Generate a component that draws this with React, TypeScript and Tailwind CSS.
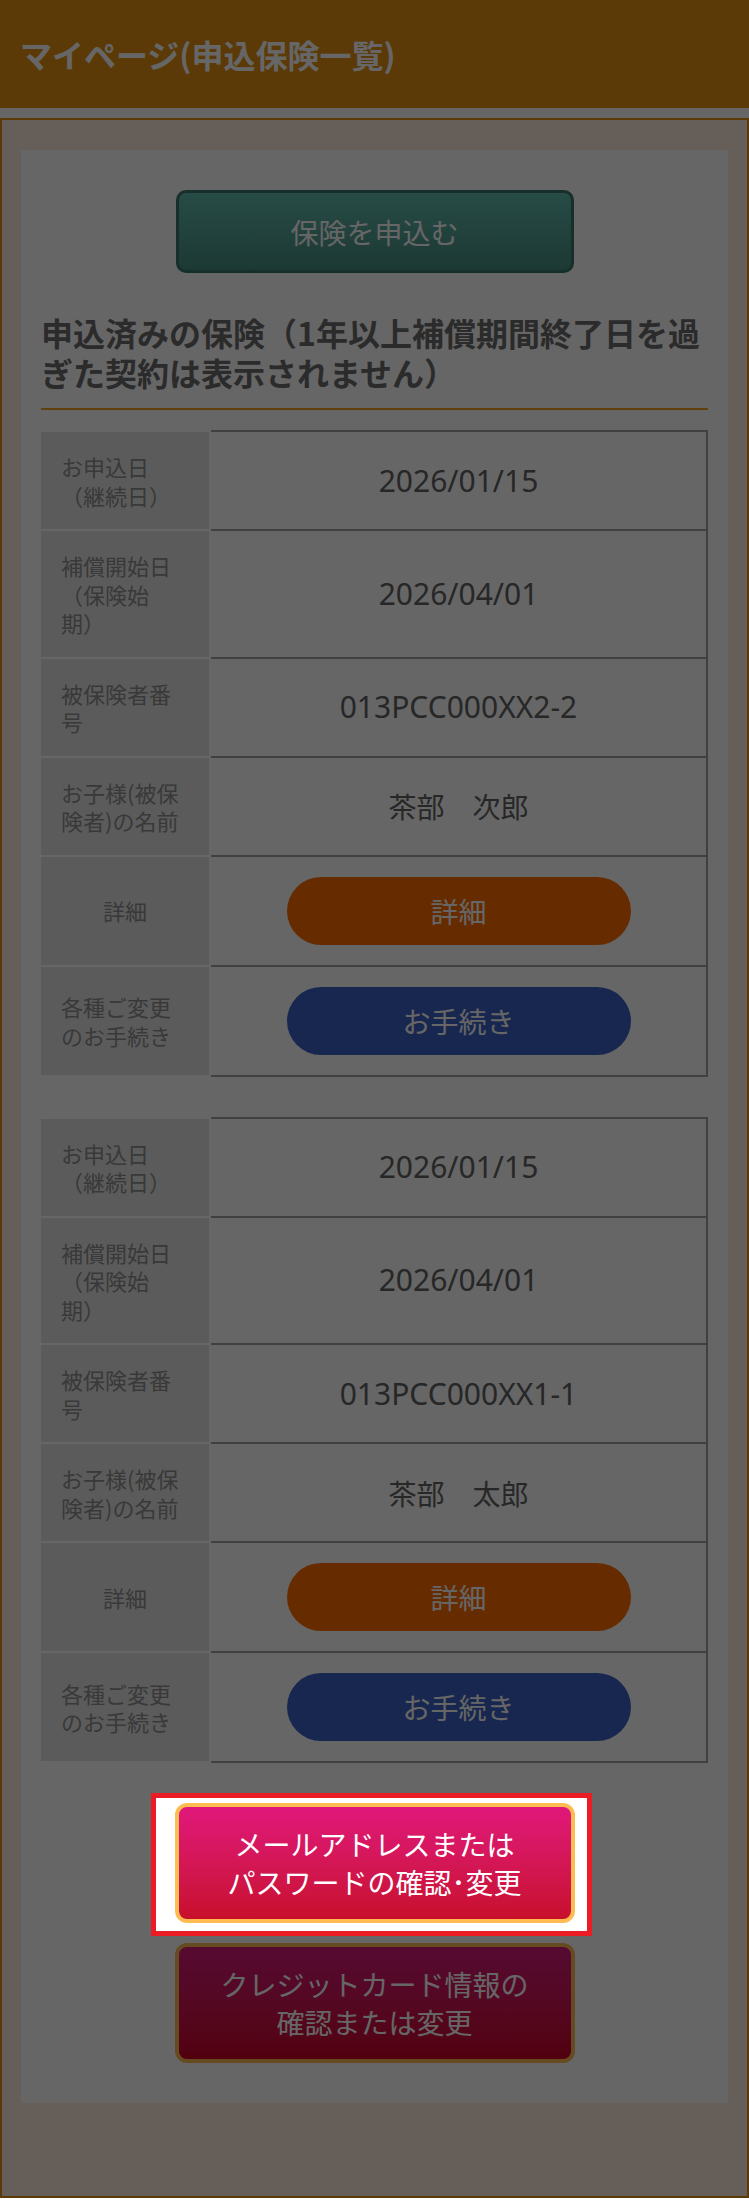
import React from "react";

type RowProps = {
  label: string;
  center?: boolean;
  last?: boolean;
  children: React.ReactNode;
};

function Row({ label, center, last, children }: RowProps) {
  return (
    <div className="flex">
      <div
        className={`w-[168px] shrink-0 border-t-2 border-white bg-[#e4e4e4] bg-clip-padding px-5 py-5 flex items-center text-[22px] leading-[28.5px] text-[#8e8e8e] ${
          center ? "justify-center" : ""
        } ${last ? "border-b-2" : ""}`}
      >
        <span>{label}</span>
      </div>
      <div
        className={`ml-[2px] flex-1 border-t-2 border-r-2 border-[#a0a0a0] py-5 flex items-center justify-center text-[28px] leading-[40px] text-[#626262] ${
          last ? "border-b-2" : ""
        }`}
      >
        {children}
      </div>
    </div>
  );
}

function Num({ children }: { children: React.ReactNode }) {
  return <span className="font-['Noto_Sans','Noto_Sans_CJK_JP',sans-serif] text-[30px]">{children}</span>;
}

function Contract({ date, start, no, name }: { date: string; start: string; no: string; name: string }) {
  return (
    <div className="flex flex-col">
      <Row label="お申込日（継続日）">
        <Num>{date}</Num>
      </Row>
      <Row label="補償開始日（保険始期）">
        <Num>{start}</Num>
      </Row>
      <Row label="被保険者番号">
        <Num>{no}</Num>
      </Row>
      <Row label="お子様(被保険者)の名前">{name}</Row>
      <Row label="詳細" center>
        <button className="w-[344px] h-[68px] rounded-full bg-[#ff6e00] text-white text-[28px]">詳細</button>
      </Row>
      <Row label="各種ご変更のお手続き" last>
        <button className="w-[344px] h-[68px] rounded-full bg-[#3c62c6] text-white text-[28px]">お手続き</button>
      </Row>
    </div>
  );
}

export default function App() {
  return (
    <div
      lang="ja"
      className="relative bg-white font-['Noto_Sans_CJK_JP','Noto_Sans',sans-serif] [text-spacing-trim:space-all]"
    >
      <header className="h-[108px] bg-[#e49114] flex items-center px-5">
        <h1 className="text-[32px] font-bold text-white leading-none">マイページ(申込保険一覧)</h1>
      </header>
      <div className="mt-[10px] border-2 border-[#e49114] bg-[#ffebdc] px-[19px] pt-[30px] pb-[93px]">
        <div className="bg-white px-5 py-10 flex flex-col">
          <button className="self-center w-[398px] h-[83px] rounded-[10px] border-[3px] border-[#3a7669] bg-linear-to-b from-[#62bcaf] to-[#498f82] text-white text-[28px]">
            保険を申込む
          </button>
          <h2 className="mt-[39px] pb-4 border-b-2 border-[#f0a020] text-[32px] font-bold leading-[40px] text-[#6b6b6b]">
            申込済みの保険（1年以上補償期間終了日を過ぎた契約は表示されません）
          </h2>
          <div className="mt-5">
            <Contract date="2026/01/15" start="2026/04/01" no="013PCC000XX2-2" name="茶部　次郎" />
          </div>
          <div className="mt-10">
            <Contract date="2026/01/15" start="2026/04/01" no="013PCC000XX1-1" name="茶部　太郎" />
          </div>
          <div className="relative z-20 mt-10 self-center w-[400px]">
            <div className="absolute -left-[24px] -right-[17px] -top-[10px] -bottom-[13px] border-[5px] border-[#ec1c24] bg-white" />
            <button className="relative w-full rounded-[12px] border-4 border-[#ffbc52] bg-linear-to-b from-[#e0177a] to-[#c80f2a] py-[18px] text-[28px] leading-[38px] text-white">
              メールアドレスまたは
              <br />
              パスワードの確認･変更
            </button>
          </div>
          <button className="mt-5 self-center w-[400px] rounded-[12px] border-4 border-[#ffb955] bg-linear-to-b from-[#d7197a] to-[#cd0025] py-[18px] text-[28px] leading-[38px] text-white">
            クレジットカード情報の
            <br />
            確認または変更
          </button>
        </div>
      </div>
      <div className="absolute inset-0 z-10 bg-black/60" />
    </div>
  );
}
